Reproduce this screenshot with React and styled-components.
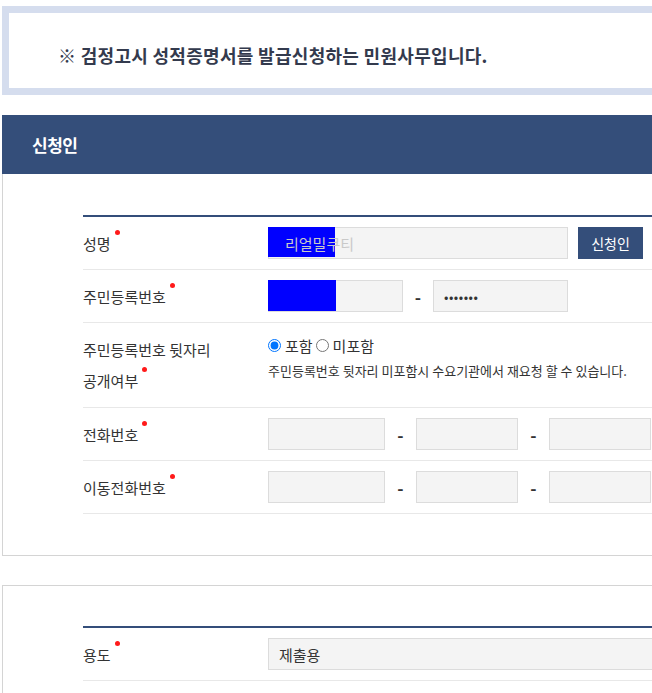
import React from 'react';
import styled, { createGlobalStyle } from 'styled-components';

const GlobalStyle = createGlobalStyle`
  body {
    margin: 0;
    overflow: hidden;
    background: #fff;
    font-family: "Noto Sans CJK KR", "Noto Sans", sans-serif;
    color: #333;
  }
`;

const Page = styled.div`
  width: 1100px;
  padding: 6px 0 0 2px;
`;

const Notice = styled.div`
  height: 75px;
  border: 7px solid #d5ddee;
  padding: 0 0 0 49px;
  display: flex;
  align-items: center;
  font-size: 18px;
  font-weight: 700;
  color: #333a4d;
  letter-spacing: 0.3px;
  p {
    margin: 8px 0 0;
  }
`;

const SectionTitle = styled.h2`
  margin: 20px 0 0;
  height: 59px;
  line-height: 59px;
  padding-left: 30px;
  background: #344e7a;
  color: #fff;
  font-size: 17px;
  font-weight: 700;
  letter-spacing: -0.5px;
`;

const Panel = styled.div`
  border: 1px solid #d4d4d4;
  border-top: ${(p) => (p.$open ? 'none' : '1px solid #d4d4d4')};
  margin-top: ${(p) => (p.$open ? '0' : '29px')};
  padding: ${(p) => (p.$open ? '41px' : '40px')} 0 41px 80px;
`;

const Table = styled.div`
  border-top: 2px solid #344e7a;
`;

const Row = styled.div`
  display: flex;
  align-items: ${(p) => (p.$top ? 'flex-start' : 'center')};
  min-height: 52px;
  border-bottom: 1px solid #e8e8e8;
`;

const Label = styled.div`
  width: 185px;
  flex-shrink: 0;
  font-size: 15px;
  line-height: 31px;
  color: #333;
  align-self: center;
  span::after {
    content: '';
    display: inline-block;
    width: 5px;
    height: 5px;
    margin-left: 4px;
    border-radius: 50%;
    background: #ff1a1a;
    position: relative;
    top: -15px;
  }
`;

const Cell = styled.div`
  display: flex;
  align-items: center;
  padding: 10px 0;
`;

const Stack = styled.div`
  padding: 12px 0 27px;
  font-size: 13px;
  color: #333;
`;

const Field = styled.div`
  position: relative;
  width: ${(p) => p.$w}px;
  height: 30px;
  border: 1px solid #dcdcdc;
  background: #f4f4f4;
`;

const Mask = styled.div`
  position: absolute;
  left: -1px;
  top: -1px;
  width: ${(p) => p.$w}px;
  height: ${(p) => p.$h}px;
  background: #0000ff;
`;

const Input = styled.input`
  position: relative;
  box-sizing: border-box;
  width: 100%;
  height: 100%;
  border: 0;
  outline: none;
  background: transparent;
  padding: 0 0 0 ${(p) => p.$pad || 10}px;
  font-family: inherit;
  font-size: ${(p) => (p.type === 'password' ? '13px' : '15px')};
  color: ${(p) => p.$color || '#333'};
  letter-spacing: ${(p) => (p.type === 'password' ? '0.5px' : '0')};
`;

const Dash = styled.span`
  width: ${(p) => p.$w}px;
  text-align: center;
  font-size: 17px;
  font-weight: 700;
  color: #333;
`;

const Button = styled.button`
  margin-left: 10px;
  width: 65px;
  height: 32px;
  border: 0;
  background: #344e7a;
  color: #fff;
  font-family: inherit;
  font-size: 14px;
  cursor: pointer;
`;

const Radios = styled.div`
  display: flex;
  align-items: center;
  font-size: 15px;
  label {
    display: flex;
    align-items: center;
    margin-right: 3px;
  }
  input {
    margin: 0 4px 0 0;
    width: 13px;
    height: 13px;
  }
`;

const Help = styled.p`
  margin: 6px 0 0;
  line-height: 18px;
`;

const Req = ({ children }) => <span>{children}</span>;

export default function App() {
  return (
    <Page>
      <GlobalStyle />
      <Notice>
        <p>※ 검정고시 성적증명서를 발급신청하는 민원사무입니다.</p>
      </Notice>

      <SectionTitle>신청인</SectionTitle>
      <Panel $open>
        <Table>
          <Row>
            <Label><Req>성명</Req></Label>
            <Cell>
              <Field $w={298}>
                <Mask $w={67} $h={30} />
                <Input defaultValue="리얼밀쿠티" $pad={16} $color="#c9c9c9" readOnly />
              </Field>
              <Button>신청인</Button>
            </Cell>
          </Row>
          <Row>
            <Label><Req>주민등록번호</Req></Label>
            <Cell>
              <Field $w={133}>
                <Mask $w={68} $h={31} />
              </Field>
              <Dash $w={30}>-</Dash>
              <Field $w={133}>
                <Input type="password" defaultValue="1234567" readOnly />
              </Field>
            </Cell>
          </Row>
          <Row $top>
            <Label>
              주민등록번호 뒷자리
              <br />
              <Req>공개여부</Req>
            </Label>
            <Stack>
              <Radios>
                <label><input type="radio" name="open" defaultChecked />포함</label>
                <label><input type="radio" name="open" />미포함</label>
              </Radios>
              <Help>주민등록번호 뒷자리 미포함시 수요기관에서 재요청 할 수 있습니다.</Help>
            </Stack>
          </Row>
          <Row>
            <Label><Req>전화번호</Req></Label>
            <Cell>
              <Field $w={115} />
              <Dash $w={31}>-</Dash>
              <Field $w={100} />
              <Dash $w={31}>-</Dash>
              <Field $w={100} />
            </Cell>
          </Row>
          <Row>
            <Label><Req>이동전화번호</Req></Label>
            <Cell>
              <Field $w={115} />
              <Dash $w={31}>-</Dash>
              <Field $w={100} />
              <Dash $w={31}>-</Dash>
              <Field $w={100} />
            </Cell>
          </Row>
        </Table>
      </Panel>

      <Panel>
        <Table>
          <Row>
            <Label><Req>용도</Req></Label>
            <Cell>
              <Field $w={500}>
                <Input defaultValue="제출용" readOnly />
              </Field>
            </Cell>
          </Row>
        </Table>
      </Panel>
    </Page>
  );
}
